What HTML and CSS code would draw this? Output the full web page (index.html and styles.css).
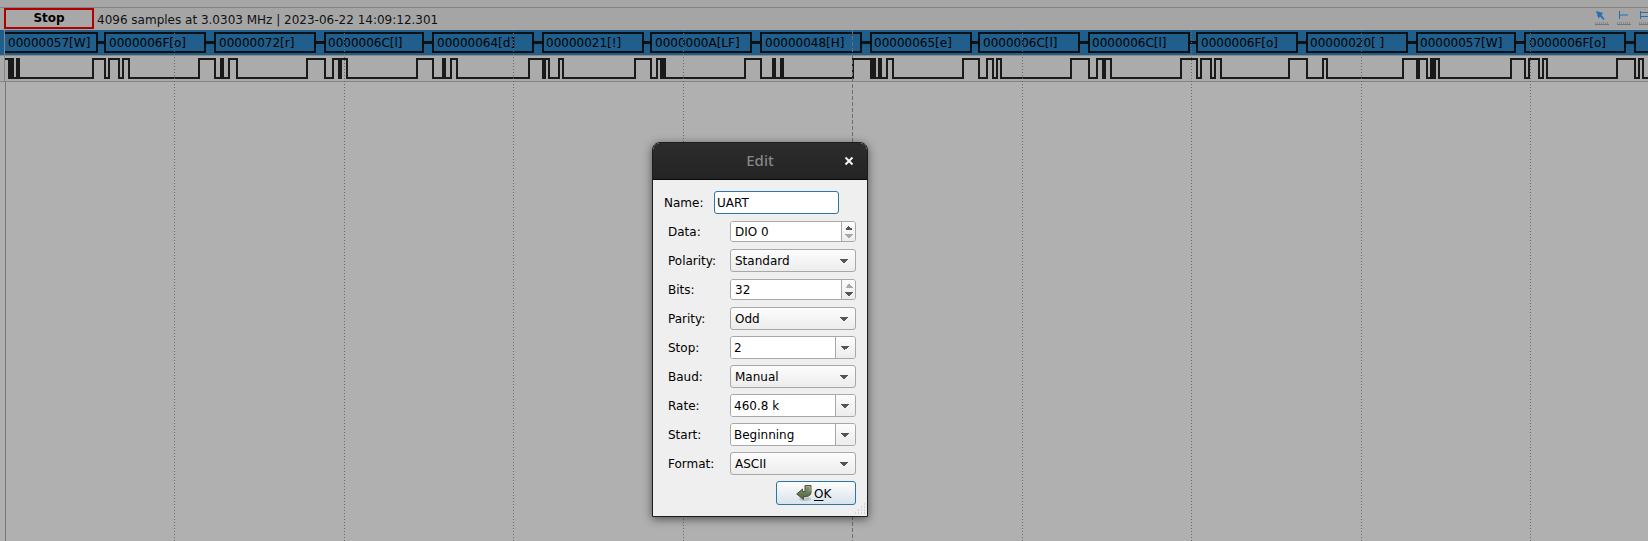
FILE: index.html
```html
<!DOCTYPE html>
<html lang="en">
<head>
<meta charset="utf-8">
<title>Logic</title>
<link rel="stylesheet" href="styles.css">
</head>
<body>
<main class="scope">
  <div class="top-strip"></div>
  <header class="status">
    <button class="state" type="button">Stop</button>
    <span class="info">4096 samples at 3.0303 MHz | 2023-06-22 14:09:12.301</span>
    <div class="tools">
      <button class="tool" type="button" aria-label="Pointer">
        <svg width="16" height="16" viewBox="0 0 16 16"><path class="ruler" d="M1 14.5H15"/><path class="ticks" d="M1 13H15"/><path class="mark-fill" d="M2 1L9 3L7.500 5L10.500 9L9.500 10L6 6.500L4.500 8.500Z"/></svg>
      </button>
      <button class="tool" type="button" aria-label="Cursor">
        <svg width="16" height="16" viewBox="0 0 16 16"><path class="ruler" d="M1 14.5H15"/><path class="ticks" d="M1 13H15"/><path class="mark" d="M3.500 1V9M4 5H12"/></svg>
      </button>
      <button class="tool" type="button" aria-label="Multiple cursors">
        <svg width="16" height="16" viewBox="0 0 16 16"><path class="ruler" d="M1 14.500H15"/><path class="ticks" d="M1 13H15"/><path class="mark" d="M2.500 1V9M3 2.500H12M3 6.500H12"/></svg>
      </button>
    </div>
  </header>
  <section class="plot" aria-label="UART">
    <div class="decoded">
      <svg class="trace" width="1648" height="25">
        <path class="link" d="M5 12.500H1648"/>
        <g class="frame">
          <path d="M4 3H97V22H4"/>
          <rect x="105" y="3" width="100" height="19"/>
          <rect x="215" y="3" width="100" height="19"/>
          <rect x="325" y="3" width="98" height="19"/>
          <rect x="433" y="3" width="100" height="19"/>
          <rect x="543" y="3" width="100" height="19"/>
          <rect x="651" y="3" width="100" height="19"/>
          <rect x="761" y="3" width="100" height="19"/>
          <rect x="871" y="3" width="100" height="19"/>
          <rect x="979" y="3" width="100" height="19"/>
          <rect x="1089" y="3" width="100" height="19"/>
          <rect x="1197" y="3" width="100" height="19"/>
          <rect x="1307" y="3" width="100" height="19"/>
          <rect x="1417" y="3" width="98" height="19"/>
          <rect x="1525" y="3" width="100" height="19"/>
          <rect x="1635" y="3" width="100" height="19"/>
        </g>
        <g class="value">
          <text x="8" y="17">00000057[W]</text>
          <text x="109" y="17">0000006F[o]</text>
          <text x="219" y="17">00000072[r]</text>
          <text x="328" y="17">0000006C[l]</text>
          <text x="437" y="17">00000064[d]</text>
          <text x="546" y="17">00000021[!]</text>
          <text x="655" y="17">0000000A[LF]</text>
          <text x="765" y="17">00000048[H]</text>
          <text x="874" y="17">00000065[e]</text>
          <text x="983" y="17">0000006C[l]</text>
          <text x="1092" y="17">0000006C[l]</text>
          <text x="1201" y="17">0000006F[o]</text>
          <text x="1310" y="17">00000020[ ]</text>
          <text x="1420" y="17">00000057[W]</text>
          <text x="1529" y="17">0000006F[o]</text>
        </g>
      </svg>
    </div>
    <div class="signal">
      <svg class="trace" width="1648" height="25">
        <path class="wave" d="M5 3H9V22H11V3H13V22H17V3H19V22H93V3H105V22H109V3H119V22H123V3H129V22H199V3H215V22H221V3H223V22H229V3H237V22H307V3H325V22H333V3H339V22H341V3H347V22H417V3H433V22H443V3H445V22H451V3H457V22H529V3H543V22H545V3H549V22H559V3H563V22H635V3H651V22H657V3H661V22H663V3H665V22H745V3H761V22H773V3H775V22H781V3H783V22H853V3H871V22H873V3H875V22H879V3H881V22H887V3H893V22H963V3H979V22H987V3H993V22H997V3H1001V22H1071V3H1089V22H1097V3H1103V22H1105V3H1111V22H1181V3H1197V22H1201V3H1211V22H1215V3H1221V22H1289V3H1307V22H1323V3H1327V22H1403V3H1417V22H1419V3H1427V22H1431V3H1433V22H1435V3H1439V22H1511V3H1525V22H1529V3H1539V22H1543V3H1547V22H1617V3H1635V22H1639V3H1643V22H1648"/>
      </svg>
    </div>
    <svg class="grid" width="1648" height="100%">
      <line class="edge" x1="5.500" x2="5.500" y1="52" y2="100%"/>
      <line class="edge faint" x1="4.500" x2="4.500" y1="0" y2="52"/>
      <g class="dots">
        <line x1="174.500" x2="174.500" y1="0" y2="100%"/>
        <line x1="344.500" x2="344.500" y1="0" y2="100%"/>
        <line x1="513.500" x2="513.500" y1="0" y2="100%"/>
        <line x1="683.500" x2="683.500" y1="0" y2="100%"/>
        <line x1="1022.500" x2="1022.500" y1="0" y2="100%"/>
        <line x1="1191.500" x2="1191.500" y1="0" y2="100%"/>
        <line x1="1361.500" x2="1361.500" y1="0" y2="100%"/>
        <line x1="1530.500" x2="1530.500" y1="0" y2="100%"/>
      </g>
      <line class="dashes" x1="852.500" x2="852.500" y1="0" y2="100%"/>
    </svg>
  </section>
</main>

<form class="dialog" role="dialog" aria-labelledby="dialog-title">
  <div class="titlebar">
    <h1 class="title" id="dialog-title">Edit</h1>
    <button class="close" type="button" aria-label="Close">
      <svg width="10" height="10" viewBox="0 0 10 10"><path d="M1.500 1.500L8.500 8.500M8.500 1.500L1.500 8.500"/></svg>
    </button>
  </div>
  <div class="fields">
    <div class="name-row">
      <label for="name">Name:</label>
      <input class="name" id="name" type="text" value="UART">
    </div>
    <div class="row">
      <label for="data">Data:</label>
      <div class="box spin">
        <input id="data" type="text" value="DIO 0">
        <div class="steps">
          <button class="step up" type="button" aria-label="Next data line"></button>
          <button class="step down" type="button" aria-label="Previous data line" disabled></button>
        </div>
      </div>
    </div>
    <div class="row">
      <label for="polarity">Polarity:</label>
      <select class="box" id="polarity"><option>Standard</option></select>
    </div>
    <div class="row">
      <label for="bits">Bits:</label>
      <div class="box spin">
        <input id="bits" type="text" value="32">
        <div class="steps">
          <button class="step up" type="button" aria-label="More bits" disabled></button>
          <button class="step down" type="button" aria-label="Fewer bits"></button>
        </div>
      </div>
    </div>
    <div class="row">
      <label for="parity">Parity:</label>
      <select class="box" id="parity"><option>Odd</option></select>
    </div>
    <div class="row">
      <label for="stop">Stop:</label>
      <div class="box combo">
        <input id="stop" type="text" value="2">
        <button class="drop" type="button" aria-label="Stop options"></button>
      </div>
    </div>
    <div class="row">
      <label for="baud">Baud:</label>
      <select class="box" id="baud"><option>Manual</option></select>
    </div>
    <div class="row">
      <label for="rate">Rate:</label>
      <div class="box combo">
        <input id="rate" type="text" value="460.8 k">
        <button class="drop" type="button" aria-label="Rate options"></button>
      </div>
    </div>
    <div class="row">
      <label for="start">Start:</label>
      <div class="box combo">
        <input id="start" type="text" value="Beginning">
        <button class="drop" type="button" aria-label="Start options"></button>
      </div>
    </div>
    <div class="row">
      <label for="format">Format:</label>
      <select class="box" id="format"><option>ASCII</option></select>
    </div>
    <button class="ok" type="button">
      <svg width="16" height="16" viewBox="0 0 16 16">
        <defs><linearGradient id="leaf" x1="0" y1="0" x2="0" y2="1"><stop offset="0" stop-color="#8b9b78"/><stop offset="1" stop-color="#4c5e3e"/></linearGradient></defs>
        <ellipse cx="9" cy="14" rx="6" ry="2" fill="#000" opacity=".15"/>
        <path d="M9 .5H15V7Q15 11 10.500 11.500H7.500V14.500L.7 9L6.500 4V6.500H9Z" fill="url(#leaf)" stroke="#4a5541"/>
        <path d="M10 1.500H14V6.500" fill="none" stroke="#a5b394"/>
      </svg>
      <span class="ok-label"><u>O</u>K</span>
    </button>
  </div>
  <svg class="grip" width="12" height="12" viewBox="0 0 12 12"><path d="M10 1h1M7 4h1M10 4h1M4 7h1M7 7h1M10 7h1M1 10h1M4 10h1M7 10h1M10 10h1"/></svg>
</form>
</body>
</html>
```
FILE: styles.css
```css
* {
  box-sizing: border-box;
}

body {
  margin: 0;
  height: 100vh;
  overflow: hidden;
  background: #b0b0b0;
  color: #000;
  font: 12px/16px "DejaVu Sans", sans-serif;
}

button,
input,
select {
  margin: 0;
  padding: 0;
  border: 0;
  background: none;
  color: inherit;
  font: inherit;
}

svg {
  display: block;
}

.scope {
  display: flex;
  flex-direction: column;
  height: 100%;
}

.top-strip {
  height: 8px;
  border-bottom: 1px solid #828282;
  background: #a6a6a6;
}

.status {
  display: flex;
  align-items: flex-start;
  gap: 3px;
  height: 22px;
  padding-left: 4px;
  overflow: hidden;
  background: #a5a5a5;
}

.state {
  width: 90px;
  height: 21px;
  border: 2px solid #b00000;
  background: #a8a8a8;
  font-weight: bold;
  line-height: 17px;
}

.info {
  padding-top: 4px;
  color: #111;
  white-space: nowrap;
}

.tools {
  display: flex;
  gap: 6px;
  margin-left: auto;
  margin-right: -6px;
  padding-top: 2px;
}

.tool {
  width: 16px;
  height: 16px;
}

.ruler {
  stroke: #747474;
}

.ticks {
  stroke: #888;
  stroke-width: 2;
  stroke-dasharray: 1 1;
}

.mark {
  fill: none;
  stroke: #2470b0;
}

.mark-fill {
  fill: #2470b0;
}

.plot {
  position: relative;
  flex: 1;
  overflow: hidden;
}

.decoded {
  height: 25px;
  overflow: hidden;
  background: #205f8c;
}

.signal {
  height: 27px;
  overflow: hidden;
  border-top: 1px solid #8a8a8a;
  border-bottom: 1px solid #858585;
  background: #ababab;
}

.link {
  stroke: #0b1015;
  stroke-width: 3;
}

.frame {
  fill: #205f8c;
  stroke: #0b1015;
  stroke-width: 2;
}

.value {
  fill: #000;
}

.wave {
  fill: none;
  stroke: #1a1a1a;
  stroke-width: 2;
}

.grid {
  position: absolute;
  top: 0;
  left: 0;
  pointer-events: none;
}

.edge {
  stroke: #777;
}

.faint {
  stroke: #858585;
}

.dots {
  stroke: #696969;
  stroke-dasharray: 1 2;
}

.dashes {
  stroke: #6f6f6f;
  stroke-dasharray: 4 2;
}

.dialog {
  position: absolute;
  top: 142px;
  left: 652px;
  width: 216px;
  overflow: hidden;
  border: 1px solid #1c1c1c;
  border-radius: 8px 8px 0 0;
  background: #efefef;
  box-shadow: 0 2px 10px rgba(0, 0, 0, 0.55);
}

.titlebar {
  display: grid;
  grid-template-columns: 36px 1fr 36px;
  align-items: center;
  height: 37px;
  border-bottom: 1px solid #0a0a0a;
  background: linear-gradient(#2c2c2c, #242424);
}

.title {
  grid-column: 2;
  margin: 0;
  padding-bottom: 2px;
  color: #868686;
  font: 500 15px/20px "Noto Sans", sans-serif;
  text-align: center;
}

.close {
  display: grid;
  place-items: center;
  height: 20px;
}

.close path {
  stroke: #f4f4f4;
  stroke-width: 2;
}

.fields {
  display: flex;
  flex-direction: column;
  gap: 6px;
  padding: 11px 11px 11px 15px;
}

.name-row {
  display: flex;
  align-items: center;
  justify-content: space-between;
  margin: 0 17px 0 -4px;
}

.name {
  width: 125px;
  height: 23px;
  padding: 0 2px;
  border: 1px solid #2c75a4;
  border-radius: 3px;
  outline: 0;
  background: #fff;
}

.row {
  display: flex;
  align-items: center;
  justify-content: space-between;
  height: 23px;
}

.box {
  display: flex;
  width: 126px;
  height: 23px;
  border: 1px solid #a8a8a8;
  border-radius: 3px;
  overflow: hidden;
}

.box input {
  flex: 1;
  min-width: 0;
  padding-left: 3px;
  outline: 0;
  background: #fff;
}

select.box {
  appearance: none;
  padding-left: 4px;
  background:
    conic-gradient(from -45deg at 50% 100%, #555 0 90deg, transparent 0) right 7px center / 8px 4px no-repeat,
    linear-gradient(#fdfdfd, #ececec);
}

.drop {
  width: 20px;
  border-left: 1px solid #a8a8a8;
  background:
    conic-gradient(from -45deg at 50% 100%, #555 0 90deg, transparent 0) left 5px center / 8px 4px no-repeat,
    linear-gradient(#fdfdfd, #ececec);
}

.spin {
  height: 21px;
}

.spin input {
  padding-left: 4px;
}

.steps {
  display: flex;
  flex-direction: column;
  width: 14px;
  border-left: 1px solid #a8a8a8;
  background: linear-gradient(#fdfdfd, #ececec);
}

.step {
  flex: 1;
  color: #555;
}

.step:disabled {
  color: #a8a8a8;
}

.up {
  background: conic-gradient(from 135deg at 50% 0, currentColor 0 90deg, transparent 0) center 4px / 8px 4px no-repeat;
}

.down {
  background: conic-gradient(from -45deg at 50% 100%, currentColor 0 90deg, transparent 0) center 2px / 8px 4px no-repeat;
}

.ok {
  display: flex;
  align-items: center;
  align-self: flex-end;
  gap: 2px;
  width: 80px;
  height: 24px;
  padding-left: 19px;
  border: 1px solid #2c75a4;
  border-radius: 3px;
  background: linear-gradient(#fcfdfe, #d9e3ea);
}

.ok-label {
  padding-top: 1px;
}

.ok u {
  text-underline-offset: 2px;
}

.grip {
  position: absolute;
  right: 1px;
  bottom: 1px;
}

.grip path {
  stroke: #b4b4b4;
}
```
